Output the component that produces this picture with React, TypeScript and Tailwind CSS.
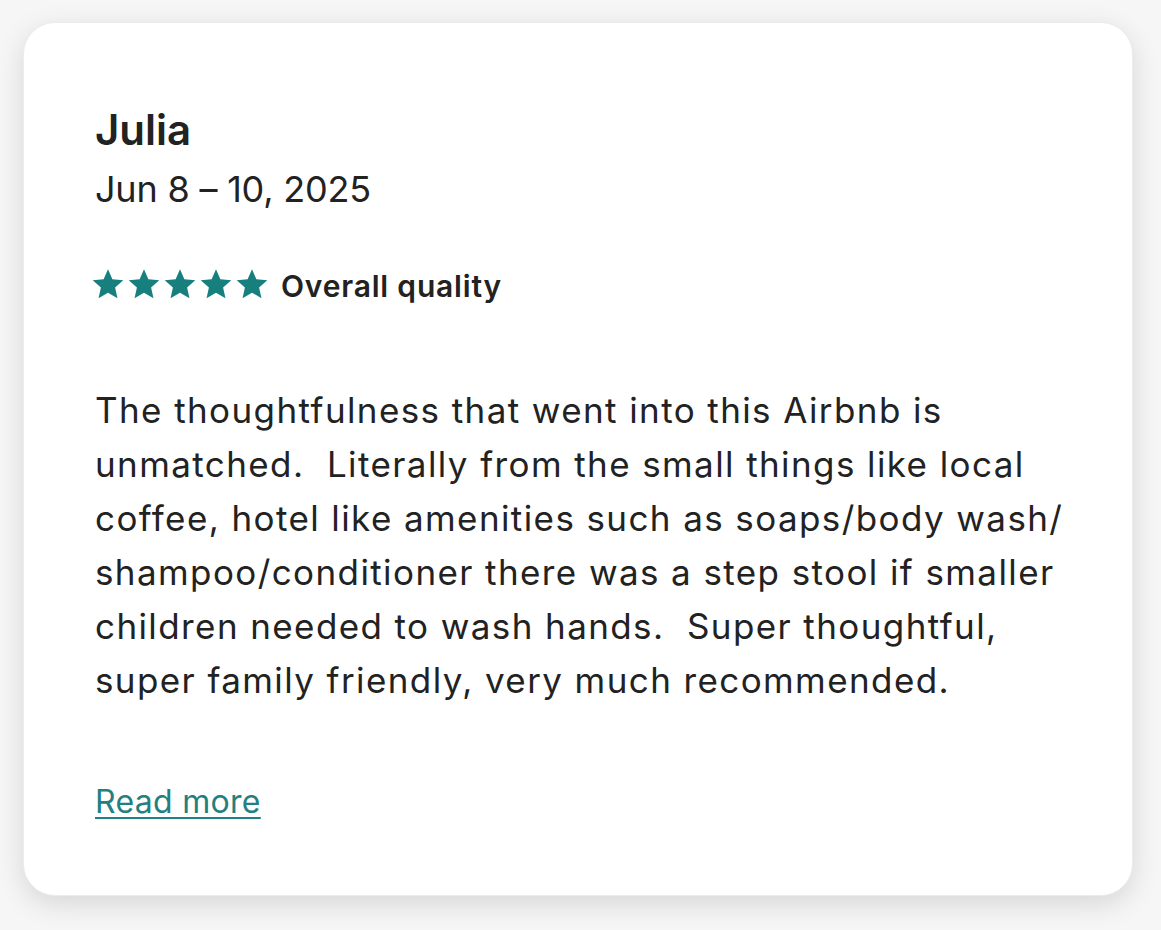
import React from "react";

const Star = () => (
  <svg viewBox="0 0 24 24" className="w-[34px] h-[34px] shrink-0" fill="#17807f">
    <path d="M12 1.6l3.1 7.1 7.7.7-5.8 5.1 1.7 7.6L12 18.1l-6.7 4 1.7-7.6-5.8-5.1 7.7-.7z" />
  </svg>
);

const lines = [
  "The thoughtfulness that went into this Airbnb is",
  "unmatched.  Literally from the small things like local",
  "coffee, hotel like amenities such as soaps/body wash/",
  "shampoo/conditioner there was a step stool if smaller",
  "children needed to wash hands.  Super thoughtful,",
  "super family friendly, very much recommended.",
];

export default function App() {
  return (
    <div
      className="w-[1161px] h-[930px] bg-[#f6f6f6] pt-[22px] pl-[23px] overflow-hidden"
      style={{ fontFamily: "Inter, 'Noto Sans', sans-serif" }}
    >
      <div className="w-[1110px] h-[874px] bg-white rounded-[32px] shadow-[0_8px_28px_rgba(0,0,0,0.13)] border border-[#ececec] pl-[71px] pt-[83px] text-[#222222] flex flex-col">
        <div className="text-[42px] font-semibold leading-[48px]">Julia</div>
        <div className="text-[36px] leading-[44px] mt-[13px] tracking-[-0.2px]">Jun 8 – 10, 2025</div>
        <div className="flex items-center h-[36px] mt-[57px]">
          <div className="flex gap-[2px] -ml-[4px] -mt-[4px]">
            <Star />
            <Star />
            <Star />
            <Star />
            <Star />
          </div>
          <span className="ml-[12px] text-[30px] font-semibold leading-[36px] tracking-[0.8px]">Overall quality</span>
        </div>
        <div className="mt-[79px] text-[35px] leading-[54px] tracking-[1.4px]">
          {lines.map((l, i) => (
            <div key={i} className="whitespace-pre">{l}</div>
          ))}
        </div>
        <div className="mt-[75px] leading-[40px]">
          <span className="text-[32px] leading-[40px] text-[#23807f] underline underline-offset-[4px] decoration-[2px] tracking-[0.3px]">
            Read more
          </span>
        </div>
      </div>
    </div>
  );
}
